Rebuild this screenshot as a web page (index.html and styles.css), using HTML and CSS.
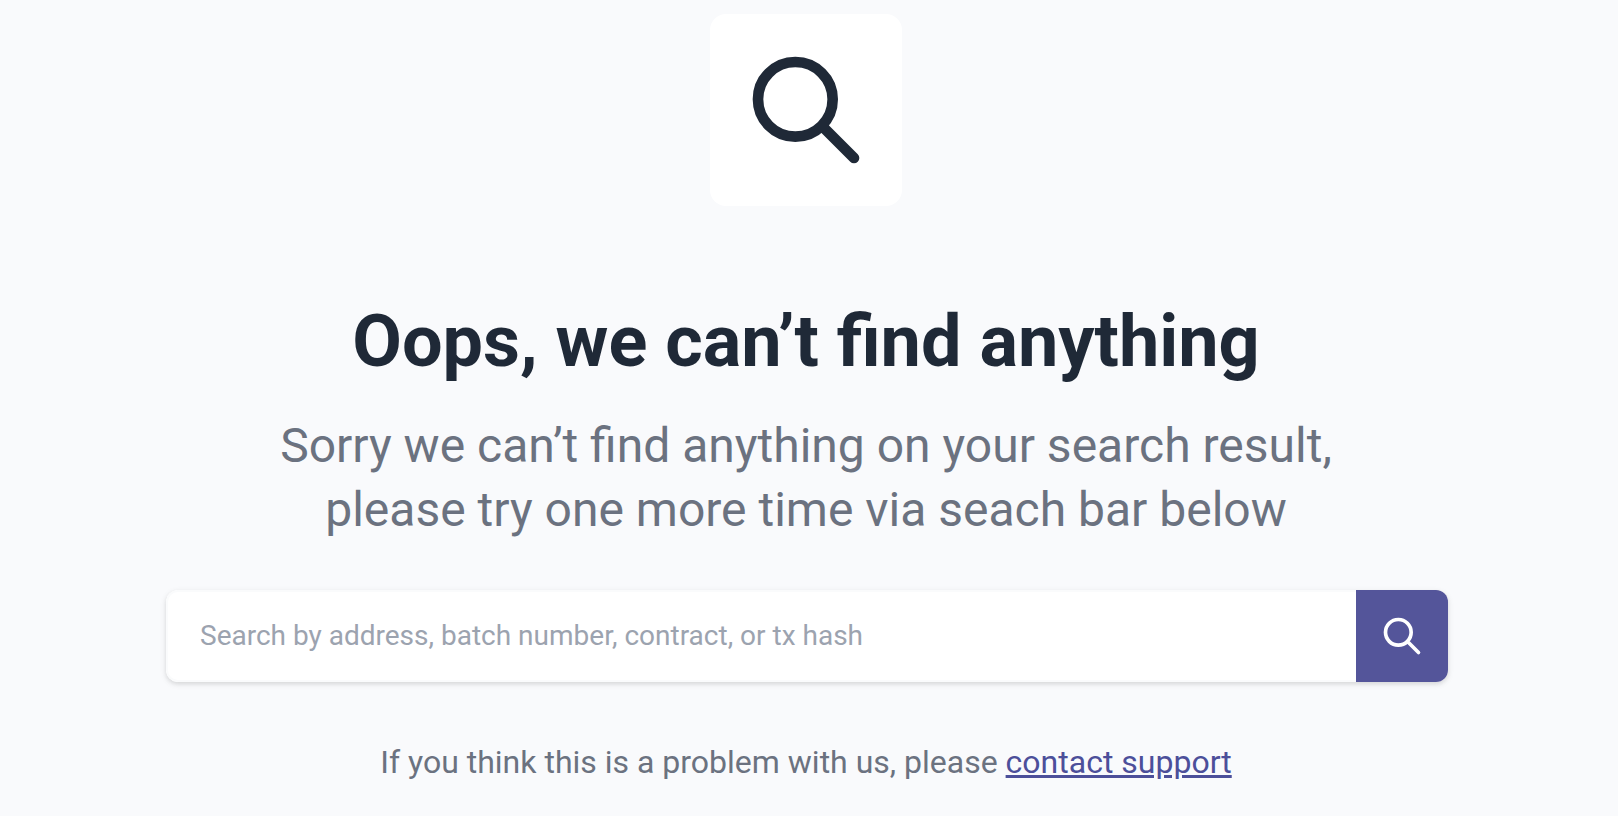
FILE: index.html
```html
<!DOCTYPE html>
<html lang="en">
<head>
<meta charset="utf-8">
<meta name="viewport" content="width=device-width, initial-scale=1">
<title>No results</title>
<link rel="stylesheet" href="styles.css">
</head>
<body>
<main class="empty">
  <div class="badge">
    <svg class="badge-icon" viewBox="0 0 24 24" aria-hidden="true"><path d="M21 21l-6-6m2-5a7 7 0 11-14 0 7 7 0 0114 0z"/></svg>
  </div>
  <h1 class="title">Oops, we can’t find anything</h1>
  <p class="lead">Sorry we can’t find anything on your search result,<br>please try one more time via seach bar below</p>
  <form class="search" role="search">
    <input class="search-input" type="text" aria-label="Search" placeholder="Search by address, batch number, contract, or tx hash">
    <button class="search-button" type="submit" aria-label="Search">
      <svg class="search-icon" viewBox="0 0 24 24" aria-hidden="true"><path d="M21 21l-6-6m2-5a7 7 0 11-14 0 7 7 0 0114 0z"/></svg>
    </button>
  </form>
  <p class="help">If you think this is a problem with us, please <a class="link" href="#support">contact support</a></p>
</main>
</body>
</html>
```
FILE: styles.css
```css
* { box-sizing: border-box; }
body {
  margin: 0;
  background: #f9fafc;
  font-family: Roboto, sans-serif;
  color: #6b7280;
}
.empty {
  display: flex;
  flex-direction: column;
  align-items: center;
  padding: 14px 166px 0 160px;
  text-align: center;
}
.badge {
  display: flex;
  padding: 32px;
  border-radius: 16px;
  background: #fff;
}
.badge-icon { width: 128px; height: 128px; }
.badge-icon, .search-icon {
  fill: none;
  stroke: #1f2937;
  stroke-width: 2;
  stroke-linecap: round;
  stroke-linejoin: round;
}
.title {
  margin: 96px 0 0;
  font-size: 72px;
  line-height: 80px;
  font-weight: 700;
  color: #1f2937;
}
.lead {
  margin: 32px 0 0;
  font-size: 48px;
  line-height: 64px;
}
.search {
  display: flex;
  align-self: stretch;
  height: 92px;
  margin: 48px 4px 0 6px;
  border-radius: 12px;
  background: #fff;
  box-shadow: 0 2px 6px rgba(0, 0, 0, .1), 0 2px 4px rgba(0, 0, 0, .06);
  overflow: hidden;
}
.search-input {
  flex: 1;
  min-width: 0;
  padding: 0 32px 2px;
  border: 2px solid #fafbfc;
  border-right: 0;
  border-radius: 12px 0 0 12px;
  outline: 0;
  background: #fff;
  font: 28px Roboto, sans-serif;
  color: #1f2937;
}
.search-input::placeholder { color: #9ca3af; opacity: 1; }
.search-button {
  display: flex;
  align-items: center;
  justify-content: center;
  width: 92px;
  padding: 0;
  border: 0;
  background: #54559a;
}
.search-icon { width: 44px; height: 44px; stroke: #fff; }
.help {
  margin: 60px 0 0;
  font-size: 32px;
  line-height: 40px;
}
.link { color: #4c4f9a; }
```
